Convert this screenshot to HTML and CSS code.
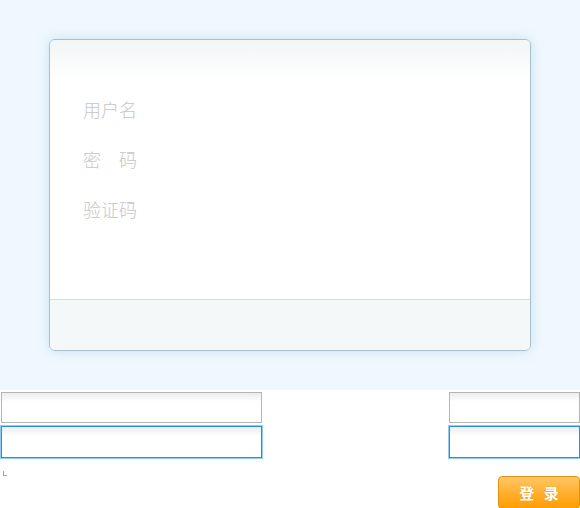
FILE: index.html
```html
<!DOCTYPE html>
<html lang="zh-CN">
<head>
<meta charset="utf-8">
<title>登录</title>
<link rel="stylesheet" href="styles.css">
</head>
<body>
<div class="stage">
  <div class="card">
    <div class="card-head"></div>
    <div class="card-body">
      <div class="label">用户名</div>
      <div class="label">密　码</div>
      <div class="label">验证码</div>
    </div>
    <div class="card-foot"></div>
  </div>
</div>
<div class="fields">
  <div class="col col-left">
    <div class="input"></div>
    <div class="input focus"></div>
  </div>
  <div class="col col-right">
    <div class="input"></div>
    <div class="input focus"></div>
  </div>
</div>
<div class="bottom">
  <span class="mark"></span>
  <button class="btn">登 录</button>
</div>
</body>
</html>
```

FILE: styles.css
```css
html, body {
  margin: 0;
  padding: 0;
  background: #ffffff;
  font-family: "Noto Sans CJK SC", "Noto Sans", sans-serif;
  overflow: hidden;
}
.stage {
  height: 390px;
  box-sizing: border-box;
  padding: 39px 0 0 49px;
  background: #eff8fe;
}
.card {
  width: 482px;
  height: 312px;
  box-sizing: border-box;
  border: 1px solid #a9bfcc;
  border-radius: 6px;
  background: #ffffff;
  box-shadow: 0 0 12px rgba(170, 205, 230, 0.55);
  display: flex;
  flex-direction: column;
  overflow: hidden;
}
.card-head {
  height: 42px;
  flex: none;
  background: linear-gradient(#f2f6f6, #ffffff);
}
.card-body {
  flex: 1;
  padding: 14px 0 0 33px;
  display: flex;
  flex-direction: column;
  gap: 24px;
}
.label {
  font-size: 18px;
  font-weight: 300;
  line-height: 26px;
  color: #c6c6c6;
}
.card-foot {
  height: 50px;
  flex: none;
  border-top: 1px solid #d3dee3;
  background: #f5f8f9;
}
.fields {
  display: flex;
  justify-content: space-between;
  padding: 2px 0 0 1px;
}
.col {
  display: flex;
  flex-direction: column;
  gap: 3px;
}
.col-left { width: 261px; }
.col-right { width: 131px; }
.input {
  height: 31px;
  box-sizing: border-box;
  border: 1px solid #b5b5b5;
  background: linear-gradient(#ececec, #ffffff 9px);
}
.input.focus {
  height: 32px;
  border: 1px solid #2a8fd5;
  box-shadow: 0 0 0 1px rgba(100, 185, 240, 0.7);
}
.bottom {
  display: flex;
  justify-content: space-between;
  align-items: flex-start;
  padding: 0 0 0 3px;
  height: 60px;
}
.mark {
  width: 3px;
  height: 4px;
  margin-top: 13px;
  border-left: 1px solid #9aa5ad;
  border-bottom: 1px solid #9aa5ad;
}
.btn {
  margin-top: 18px;
  width: 82px;
  height: 33px;
  border: 1px solid #e3920f;
  border-radius: 4px;
  background: linear-gradient(#ffc865, #ffae2a 55%, #ff9d05);
  color: #ffffff;
  font-family: "Noto Sans CJK SC", sans-serif;
  font-size: 15px;
  font-weight: bold;
  letter-spacing: 3px;
  padding: 0 0 0 3px;
  text-shadow: 0 0 1px rgba(200, 110, 0, 0.5);
}
```
